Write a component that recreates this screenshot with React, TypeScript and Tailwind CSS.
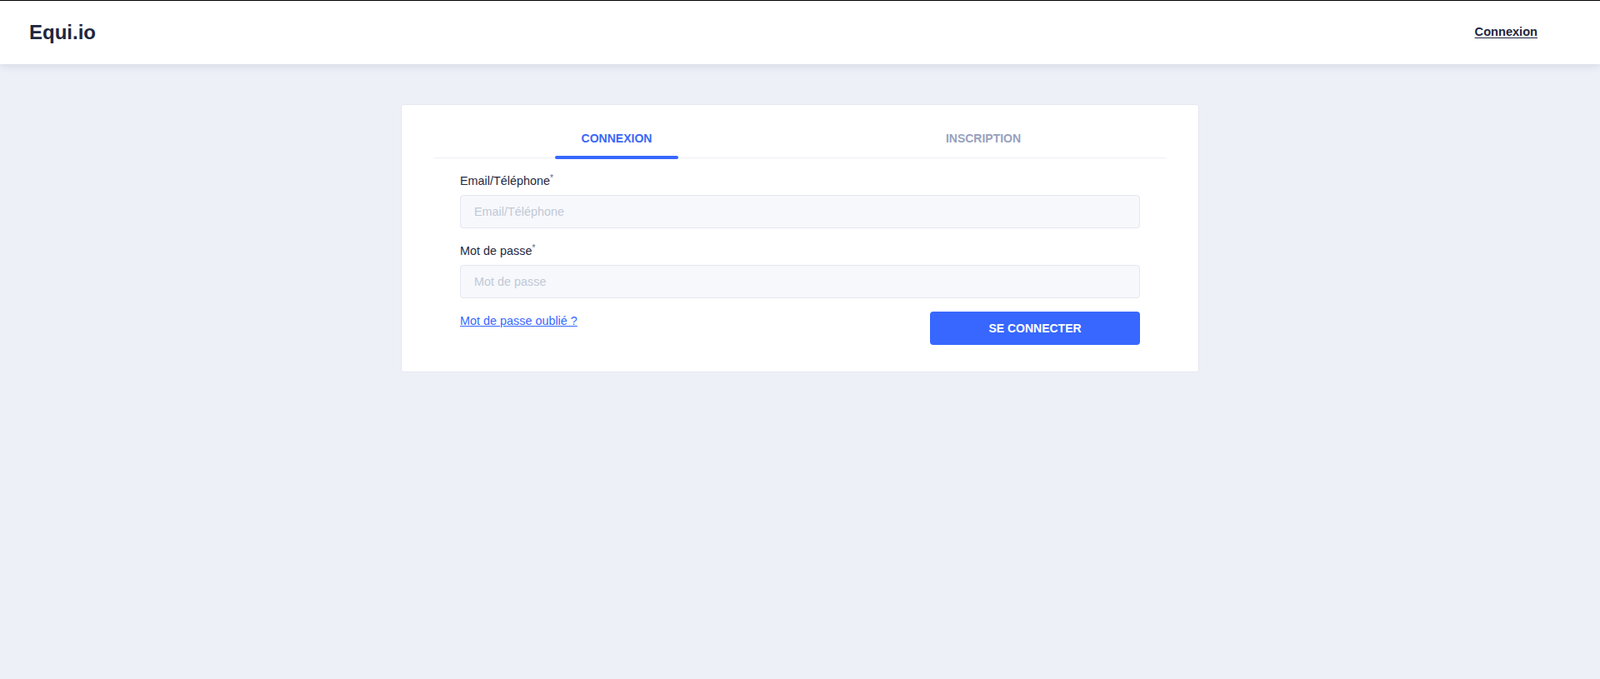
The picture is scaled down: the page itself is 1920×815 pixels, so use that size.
import React, { useState } from "react";

export default function App() {
  const [tab, setTab] = useState<"login" | "signup">("login");

  return (
    <div
      className="min-h-screen bg-[#edf0f7] text-[#1f2940]"
      style={{ fontFamily: '"Liberation Sans", Arial, sans-serif' }}
    >
      <header className="relative z-10 flex h-[77px] items-center justify-between border-t border-black bg-white pl-[35px] pr-[75px] shadow-[0_2px_10px_rgba(30,40,70,0.12)]">
        <div className="text-[24px] font-bold leading-8 text-[#1d2740]">Equi.io</div>
        <a href="#" className="text-[14.6px] font-bold text-[#1d2740] underline underline-offset-2">
          Connexion
        </a>
      </header>

      <main className="flex justify-center pt-[48px]">
        <div className="w-[958px] rounded-[4px] border border-[#e4e7ef] bg-white px-[38px] pb-[32px]">
          <div className="flex border-b border-[#edf0f5]">
            <button
              onClick={() => setTab("login")}
              className={
                "relative flex-1 pt-[32px] pb-[15px] text-[14px] font-bold leading-4 " +
                (tab === "login" ? "text-[#3a67f5]" : "text-[#98a1bd]")
              }
            >
              CONNEXION
              {tab === "login" && (
                <span className="absolute -bottom-[2px] left-1/2 h-[4px] w-[148px] -translate-x-1/2 rounded-full bg-[#3767fe]" />
              )}
            </button>
            <button
              onClick={() => setTab("signup")}
              className={
                "relative flex-1 pt-[32px] pb-[15px] text-[14px] font-bold leading-4 " +
                (tab === "signup" ? "text-[#3a67f5]" : "text-[#98a1bd]")
              }
            >
              INSCRIPTION
              {tab === "signup" && (
                <span className="absolute -bottom-[2px] left-1/2 h-[4px] w-[148px] -translate-x-1/2 rounded-full bg-[#3767fe]" />
              )}
            </button>
          </div>

          <form className="mx-[32px] pt-[17px]" onSubmit={(e) => e.preventDefault()}>
            <label className="block text-[14.4px] leading-5 text-[#1f2940]">
              Email/Téléphone<sup className="text-[10px] text-[#56657f]">*</sup>
            </label>
            <input
              type="text"
              placeholder="Email/Téléphone"
              className="mt-[7px] block h-[40px] w-full rounded-[4px] border border-[#e3e7ef] bg-[#f6f8fc] px-[16px] text-[14.4px] outline-none placeholder:text-[#c2c8d6]"
            />

            <label className="mt-[17px] block text-[14.4px] leading-5 text-[#1f2940]">
              Mot de passe<sup className="text-[10px] text-[#56657f]">*</sup>
            </label>
            <input
              type="password"
              placeholder="Mot de passe"
              className="mt-[7px] block h-[40px] w-full rounded-[4px] border border-[#e3e7ef] bg-[#f6f8fc] px-[16px] text-[14.4px] outline-none placeholder:text-[#c2c8d6]"
            />

            <div className="mt-[16px] flex items-start justify-between">
              <a href="#" className="pt-[1px] text-[14.4px] leading-5 text-[#3767fe] underline">
                Mot de passe oublié ?
              </a>
              <button
                type="submit"
                className="h-[40px] w-[252px] rounded-[4px] bg-[#3767fe] text-[14px] font-bold text-white"
              >
                SE CONNECTER
              </button>
            </div>
          </form>
        </div>
      </main>
    </div>
  );
}
